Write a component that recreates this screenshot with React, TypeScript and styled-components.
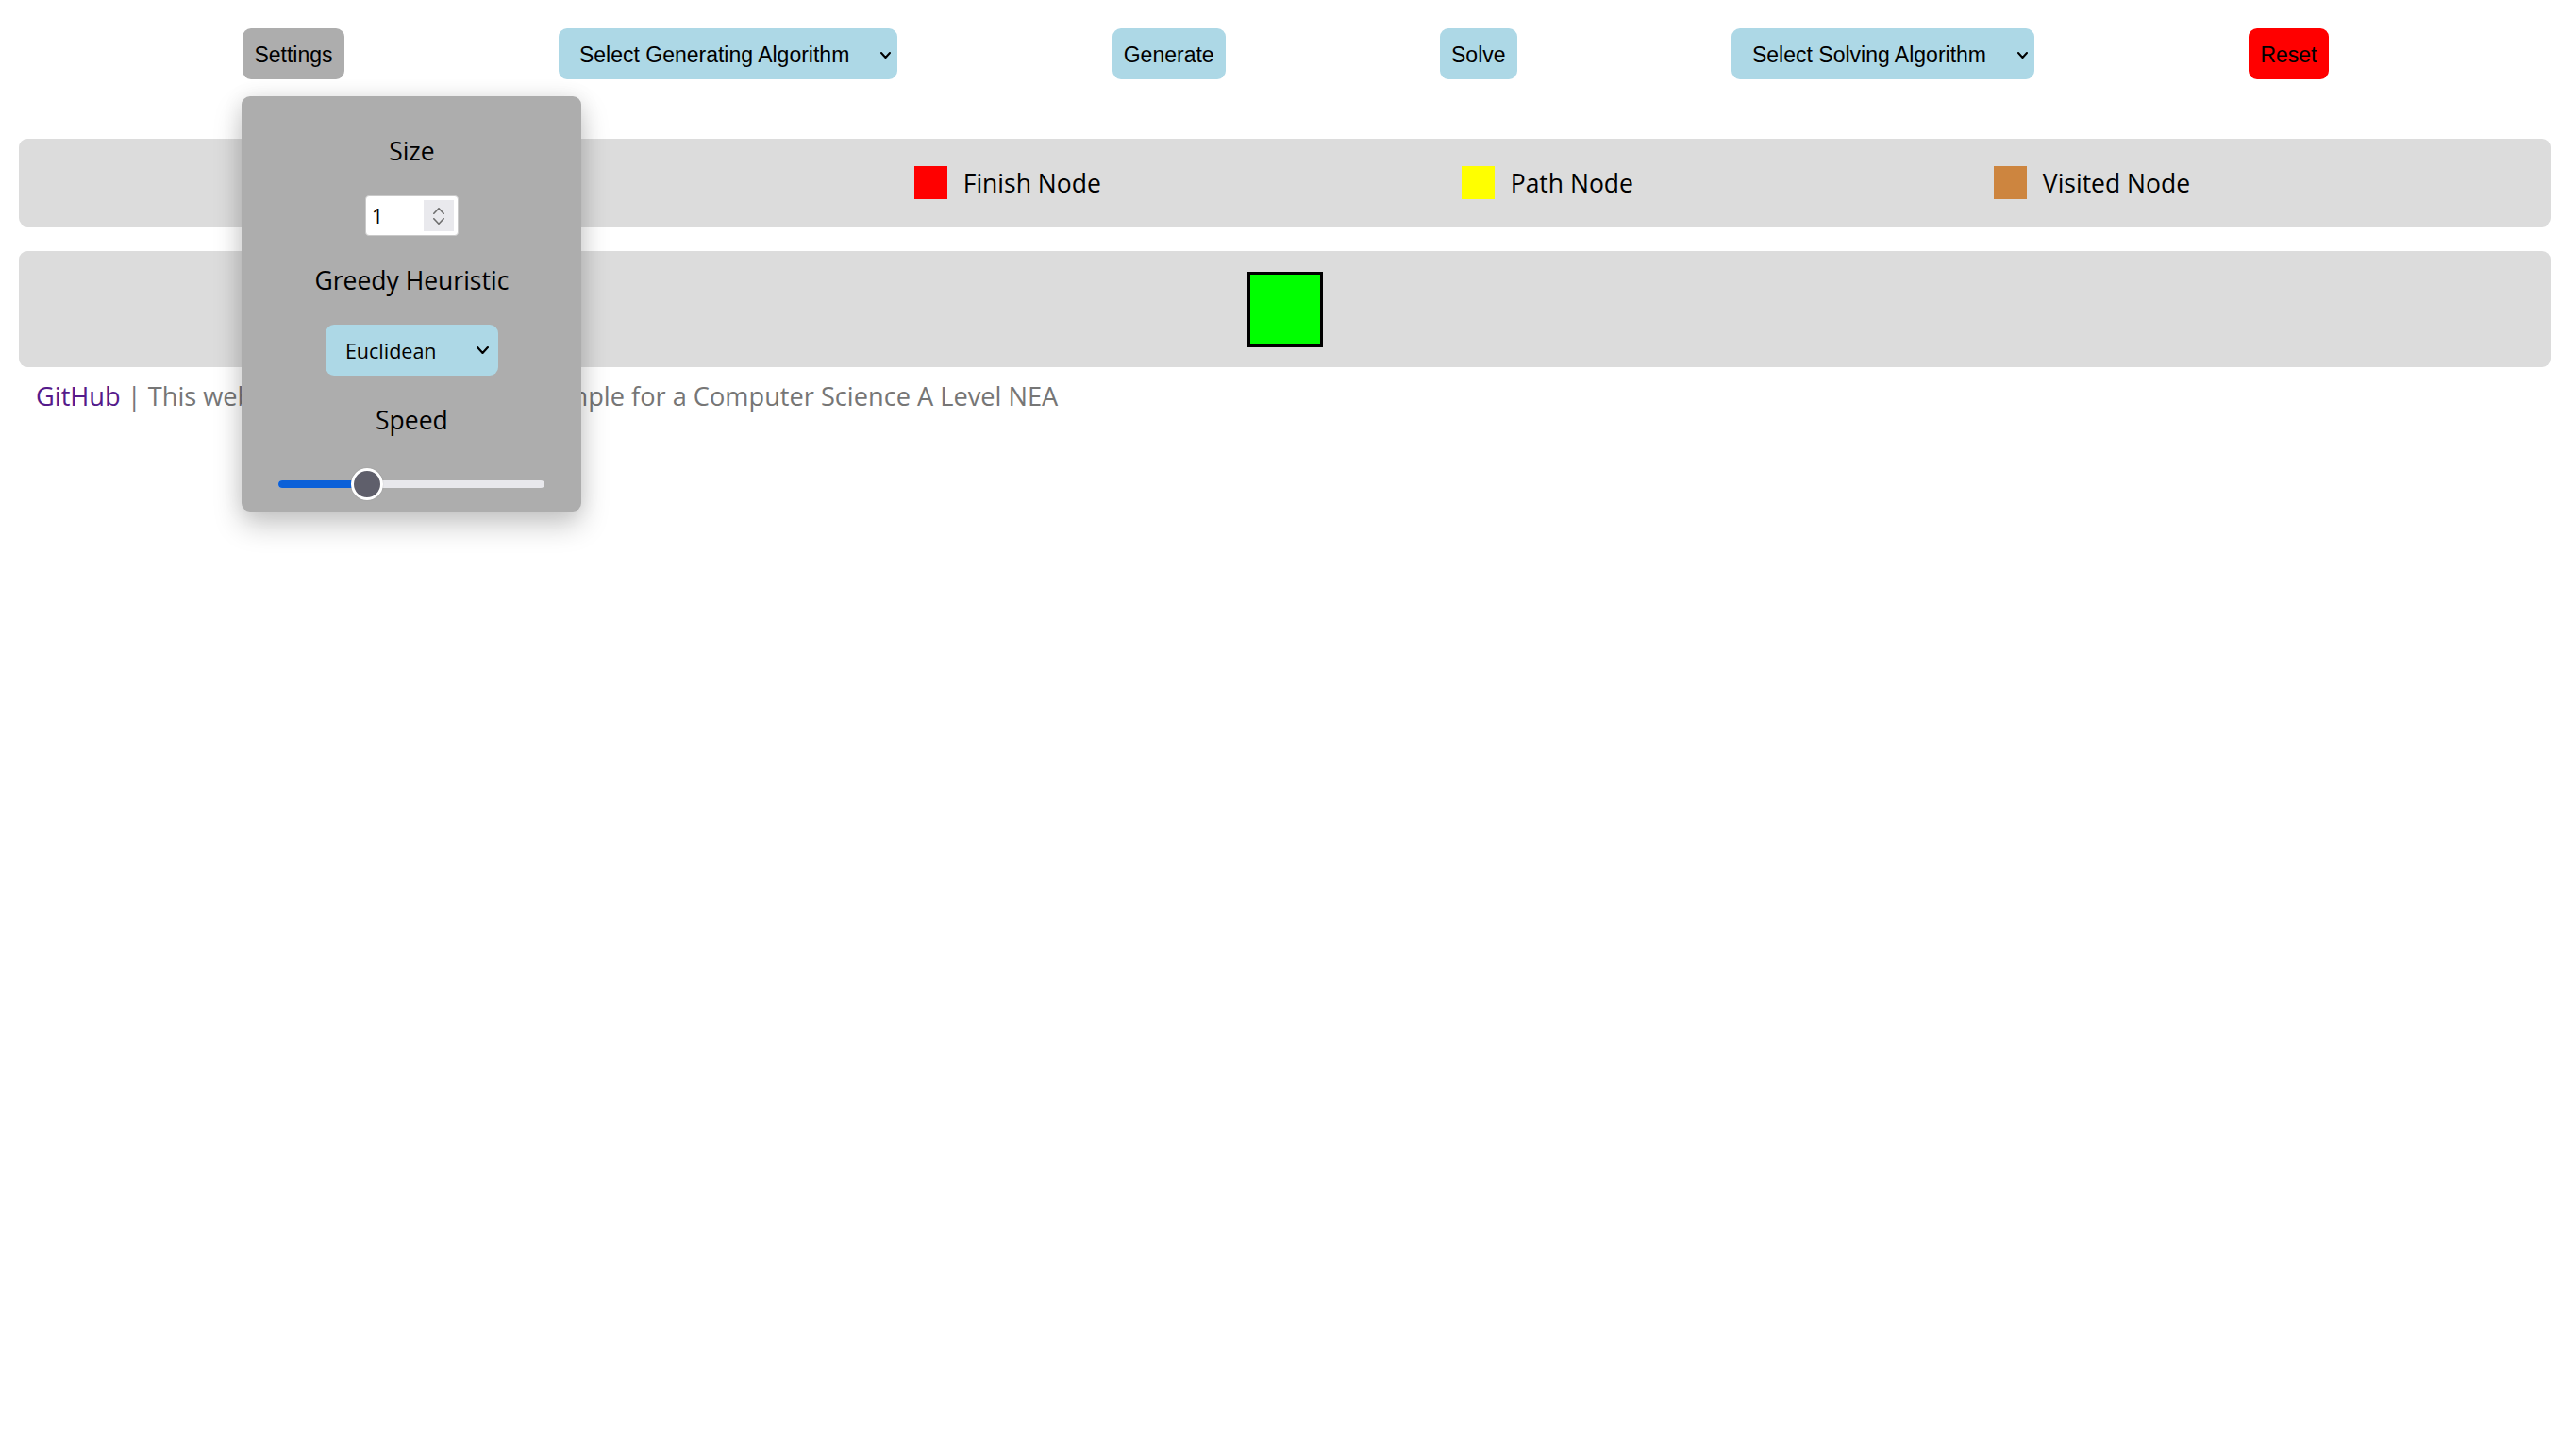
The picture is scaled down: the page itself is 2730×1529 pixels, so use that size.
import React from "react";
import styled, { createGlobalStyle } from "styled-components";

const GlobalStyle = createGlobalStyle`
  html, body { margin: 0; padding: 0; background: #ffffff; }
  body { font-family: "Open Sans", "Noto Sans", sans-serif; color: #000; }
  * { box-sizing: border-box; }
`;

const Page = styled.div`
  width: 2730px;
  min-height: 1529px;
  background: #ffffff;
`;

const TopBar = styled.nav`
  display: flex;
  justify-content: space-evenly;
  align-items: flex-start;
  padding: 30px 35px 0 30px;
`;

const ControlWrap = styled.div`
  position: relative;
`;

type Tone = "grey" | "blue" | "red";

const toneColor = (t: Tone) =>
  t === "grey" ? "#adadad" : t === "red" ? "#ff0000" : "#add8e6";

const ActionButton = styled.button<{ $tone: Tone }>`
  height: 54px;
  padding: 2px 12px 0;
  border: none;
  border-radius: 9px;
  font-family: "Liberation Sans", Arial, sans-serif;
  font-size: 23px;
  color: #000;
  background: ${(p) => toneColor(p.$tone)};
  display: flex;
  align-items: center;
  justify-content: center;
  cursor: pointer;
`;

const DropButton = styled.button`
  height: 54px;
  padding: 2px 7px 0 22px;
  border: none;
  border-radius: 9px;
  font-family: "Liberation Sans", Arial, sans-serif;
  font-size: 23px;
  color: #000;
  background: #add8e6;
  display: flex;
  align-items: center;
  gap: 33px;
  cursor: pointer;
`;

const SettingsPanel = styled.div`
  position: absolute;
  top: calc(100% + 18px);
  left: -1px;
  width: 360px;
  padding: 41px 0 12px;
  background: #adadad;
  border-radius: 9px;
  box-shadow: 0 14px 30px rgba(0, 0, 0, 0.22), 0 0 22px rgba(0, 0, 0, 0.08);
  display: flex;
  flex-direction: column;
  align-items: center;
  gap: 30px;
  z-index: 10;
`;

const PanelLabel = styled.div`
  font-size: 26.5px;
  line-height: 34px;
  color: #000;
`;

const NumberField = styled.div`
  width: 99px;
  height: 43px;
  background: #ffffff;
  border: 1px solid #c9c9c9;
  border-radius: 4px;
  display: flex;
  align-items: center;
  justify-content: space-between;
  padding: 0 4px 0 6px;
  font-size: 21px;
`;

const Spinner = styled.div`
  width: 32px;
  height: 33px;
  background: #e9e9ed;
  display: flex;
  flex-direction: column;
  align-items: center;
  justify-content: center;
  gap: 4px;
`;

const HeuristicSelect = styled.button`
  width: 183px;
  height: 54px;
  border: none;
  border-radius: 9px;
  background: #add8e6;
  padding: 0 10px 0 21px;
  display: flex;
  align-items: center;
  justify-content: space-between;
  font-family: "Open Sans", "Noto Sans", sans-serif;
  font-size: 21.5px;
  color: #000;
`;

const SliderRoot = styled.div`
  position: relative;
  width: 282px;
  height: 34px;
  margin-top: 4px;
  display: flex;
  align-items: center;
`;

const SliderTrack = styled.div`
  width: 100%;
  height: 8px;
  border-radius: 4px;
  background: #e8e8ec;
  overflow: hidden;
`;

const SliderFill = styled.div`
  height: 100%;
  background: #0b60d8;
`;

const SliderThumb = styled.div`
  position: absolute;
  top: 0;
  width: 34px;
  height: 34px;
  border-radius: 50%;
  background: #5f5f6b;
  border: 3px solid #ffffff;
  transform: translateX(-50%);
  box-shadow: 0 0 1px rgba(0, 0, 0, 0.3);
`;

const LegendBar = styled.section`
  margin: 63px 27px 0 20px;
  height: 93px;
  background: #dcdcdc;
  border-radius: 9px;
  display: flex;
  justify-content: space-evenly;
  align-items: center;
`;

const LegendItem = styled.div`
  display: flex;
  align-items: center;
  gap: 17px;
  font-size: 26.5px;
  line-height: 36px;
`;

const Swatch = styled.span<{ $color: string }>`
  width: 35px;
  height: 35px;
  background: ${(p) => p.$color};
`;

const GridBar = styled.section`
  margin: 26px 27px 0 20px;
  height: 123px;
  background: #dcdcdc;
  border-radius: 9px;
  display: flex;
  justify-content: center;
  align-items: center;
`;

const Cell = styled.div<{ $color: string }>`
  width: 80px;
  height: 80px;
  background: ${(p) => p.$color};
  border: 3px solid #000;
`;

const Footer = styled.p`
  margin: 12px 0 0 38px;
  font-size: 27.2px;
  line-height: 37px;
  color: #767676;
`;

const FooterLink = styled.a`
  color: #551a8b;
  text-decoration: none;
`;

const Chevron: React.FC<{ dir?: "up" | "down"; w: number; h: number; color?: string; stroke?: number }> = ({
  dir = "down",
  w,
  h,
  color = "#000",
  stroke = 2,
}) => (
  <svg width={w} height={h} viewBox={`0 0 ${w} ${h}`} fill="none">
    <polyline
      points={
        dir === "down"
          ? `${stroke / 2},${stroke / 2} ${w / 2},${h - stroke / 2} ${w - stroke / 2},${stroke / 2}`
          : `${stroke / 2},${h - stroke / 2} ${w / 2},${stroke / 2} ${w - stroke / 2},${h - stroke / 2}`
      }
      stroke={color}
      strokeWidth={stroke}
      strokeLinecap="round"
      strokeLinejoin="round"
    />
  </svg>
);

const legend = [
  { label: "Start Node", color: "#00ff00" },
  { label: "Finish Node", color: "#ff0000" },
  { label: "Path Node", color: "#ffff00" },
  { label: "Visited Node", color: "#cd853f" },
];

export default function App() {
  const speed = 33.3;
  return (
    <Page>
      <GlobalStyle />
      <TopBar>
        <ControlWrap>
          <ActionButton $tone="grey">Settings</ActionButton>
          <SettingsPanel>
            <PanelLabel>Size</PanelLabel>
            <NumberField>
              <span>1</span>
              <Spinner>
                <Chevron dir="up" w={12} h={7} color="#6e6e6e" stroke={1.6} />
                <Chevron dir="down" w={12} h={7} color="#6e6e6e" stroke={1.6} />
              </Spinner>
            </NumberField>
            <PanelLabel>Greedy Heuristic</PanelLabel>
            <HeuristicSelect>
              <span>Euclidean</span>
              <Chevron w={13} h={8} stroke={2.2} />
            </HeuristicSelect>
            <PanelLabel>Speed</PanelLabel>
            <SliderRoot>
              <SliderTrack>
                <SliderFill style={{ width: `${speed}%` }} />
              </SliderTrack>
              <SliderThumb style={{ left: `${speed}%` }} />
            </SliderRoot>
          </SettingsPanel>
        </ControlWrap>
        <DropButton>
          <span>Select Generating Algorithm</span>
          <Chevron w={11} h={7} stroke={2} />
        </DropButton>
        <ActionButton $tone="blue">Generate</ActionButton>
        <ActionButton $tone="blue">Solve</ActionButton>
        <DropButton>
          <span>Select Solving Algorithm</span>
          <Chevron w={11} h={7} stroke={2} />
        </DropButton>
        <ActionButton $tone="red">Reset</ActionButton>
      </TopBar>

      <LegendBar>
        {legend.map((l) => (
          <LegendItem key={l.label}>
            <Swatch $color={l.color} />
            <span>{l.label}</span>
          </LegendItem>
        ))}
      </LegendBar>

      <GridBar>
        <Cell $color="#00ff00" />
      </GridBar>

      <Footer>
        <FooterLink href="#">GitHub</FooterLink> | This website was created as an example for a Computer
        Science A Level NEA
      </Footer>
    </Page>
  );
}
